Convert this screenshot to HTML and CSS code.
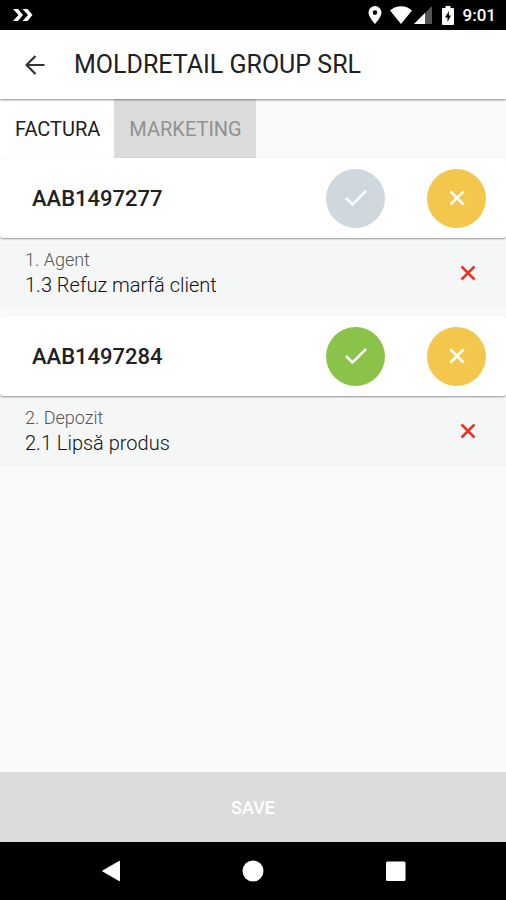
FILE: index.html
```html
<!DOCTYPE html>
<html lang="ro">
<head>
<meta charset="utf-8">
<meta name="viewport" content="width=device-width, initial-scale=1">
<title>MOLDRETAIL GROUP SRL</title>
<link rel="stylesheet" href="styles.css">
</head>
<body>
<div class="status">
  <svg width="20" height="14" viewBox="0 0 20 14" fill="#fff"><path d="M0 1h5l5 6-5 6H0l5.500-6zM9.500 1h5l5 6-5 6h-5l5.500-6z"/></svg>
  <div class="status-icons">
    <svg class="pin" width="14" height="18" viewBox="0 0 14 18"><path fill="#fff" fill-rule="evenodd" d="M7 0a6.500 6.500 0 0 1 6.500 6.500C13.500 11 7 18 7 18S.5 11 .5 6.500A6.500 6.500 0 0 1 7 0zm0 4.300a2.300 2.300 0 1 0 0 4.600 2.300 2.300 0 0 0 0-4.600z"/></svg>
    <svg width="22" height="18" viewBox="0 0 22 18"><path fill="#fff" d="M0 4.500C6-1.300 16-1.300 22 4.500L11 18z"/></svg>
    <svg class="signal" width="18" height="18" viewBox="0 0 18 18"><path fill="#555" d="M18 0v18H0z"/><path fill="#fff" d="M11 7v11H0z"/></svg>
    <svg class="battery" width="12" height="19" viewBox="0 0 12 19"><path fill="#fff" d="M3.500 0h5v2H11a1 1 0 0 1 1 1v15a1 1 0 0 1-1 1H1a1 1 0 0 1-1-1V3a1 1 0 0 1 1-1h2.500z"/><path fill="#000" d="M7 5L3 11.500h2.500V16L9 9.500H6.800z"/></svg>
    <span>9:01</span>
  </div>
</div>
<header class="appbar">
  <button class="back" aria-label="Back"><svg width="20" height="20" viewBox="0 0 20 20" fill="none" stroke="#333" stroke-width="2.200"><path d="M19.500 10H2M10.500 1L1.500 10l9 9"/></svg></button>
  <h1>MOLDRETAIL GROUP SRL</h1>
</header>
<nav class="tabs">
  <button class="tab active">FACTURA</button>
  <button class="tab">MARKETING</button>
</nav>
<main>
  <section class="invoice">
    <div class="row">
      <h2>AAB1497277</h2>
      <button class="round muted" aria-label="Accept"><svg width="24" height="20" viewBox="0 0 24 20"><path d="M2 10l6.500 6.500L22 3"/></svg></button>
      <button class="round reject" aria-label="Reject"><svg width="16" height="16" viewBox="0 0 16 16"><path d="M1.500 1.500l13 13M14.500 1.500l-13 13"/></svg></button>
    </div>
    <div class="detail">
      <div><p class="group">1. Agent</p><p class="reason">1.3 Refuz marfă client</p></div>
      <button class="remove" aria-label="Remove"><svg width="16" height="16" viewBox="0 0 16 16"><path d="M1.500 1.500l13 13M14.500 1.500l-13 13"/></svg></button>
    </div>
  </section>
  <section class="invoice">
    <div class="row">
      <h2>AAB1497284</h2>
      <button class="round accept" aria-label="Accept"><svg width="24" height="20" viewBox="0 0 24 20"><path d="M2 10l6.500 6.500L22 3"/></svg></button>
      <button class="round reject" aria-label="Reject"><svg width="16" height="16" viewBox="0 0 16 16"><path d="M1.500 1.500l13 13M14.500 1.500l-13 13"/></svg></button>
    </div>
    <div class="detail">
      <div><p class="group">2. Depozit</p><p class="reason">2.1 Lipsă produs</p></div>
      <button class="remove" aria-label="Remove"><svg width="16" height="16" viewBox="0 0 16 16"><path d="M1.500 1.500l13 13M14.500 1.500l-13 13"/></svg></button>
    </div>
  </section>
</main>
<button class="save">SAVE</button>
<div class="navbar">
  <button aria-label="Back"><svg width="22" height="22" viewBox="0 0 22 22"><path fill="#fff" d="M20 1.500v19a.7.7 0 0 1-1 .6L2.500 11.600a.7.7 0 0 1 0-1.200L19 .9a.7.7 0 0 1 1 .6z"/></svg></button>
  <button aria-label="Home"><svg width="22" height="22" viewBox="0 0 22 22"><circle cx="11" cy="11" r="10.500" fill="#fff"/></svg></button>
  <button aria-label="Recents"><svg width="22" height="22" viewBox="0 0 22 22"><rect x="2" y="1.500" width="19.500" height="19.500" rx="1.500" fill="#fff"/></svg></button>
</div>
</body>
</html>
```
FILE: styles.css
```css
* { box-sizing: border-box; }
body {
  margin: 0;
  min-height: 100vh;
  display: flex;
  flex-direction: column;
  background: #fafafa;
  color: #212121;
  font-family: Roboto, "Liberation Sans", sans-serif;
}
h1, h2, p { margin: 0; }
button {
  border: 0;
  padding: 0;
  background: none;
  color: inherit;
  font: inherit;
}
svg { display: block; }
.status {
  display: flex;
  align-items: center;
  justify-content: space-between;
  height: 30px;
  padding: 0 10px 0 13px;
  background: #000;
  color: #fff;
  font-size: 17px;
  font-weight: 500;
}
.status-icons { display: flex; align-items: center; }
.pin { margin-right: 8px; }
.signal { margin: 0 10px 0 2px; }
.battery { margin-right: 9px; }
.appbar {
  position: relative;
  display: flex;
  align-items: center;
  gap: 29px;
  height: 69px;
  padding: 0 25px;
  background: #fff;
  box-shadow: 0 1px 2px rgba(0, 0, 0, .45);
}
h1 { font-size: 25px; font-weight: 400; }
.tabs { display: flex; height: 59px; }
.tab {
  padding: 0 14px 0 15px;
  background: #dcdcdc;
  color: #919191;
  font-size: 20px;
}
.tab.active { background: #fff; color: #212121; }
main { flex: 1; }
.invoice { margin-bottom: 8px; }
.row {
  position: relative;
  display: flex;
  align-items: center;
  height: 80px;
  padding: 0 20px 0 32px;
  background: #fff;
  border-radius: 3px;
  box-shadow: 0 1px 2px rgba(0, 0, 0, .4);
}
h2 { flex: 1; font-size: 22px; font-weight: 500; }
.round {
  display: grid;
  place-items: center;
  width: 59px;
  height: 59px;
  margin-left: 42px;
  border-radius: 50%;
}
.round path { fill: none; stroke: #fff; stroke-width: 2.5; }
.muted { background: #cfd8dc; }
.accept { background: #8bc34a; }
.reject { background: #f3c64c; }
.detail {
  display: flex;
  align-items: center;
  justify-content: space-between;
  height: 70px;
  padding: 0 30px 0 25px;
  background: #f5f7f7;
}
.group { color: #555; font-size: 18px; font-weight: 300; line-height: 24px; }
.reason { color: #111; font-size: 20px; font-weight: 300; line-height: 26px; }
.remove path { fill: none; stroke: #e93323; stroke-width: 2.5; }
.save {
  height: 70px;
  background: #dcdcdc;
  color: #fff;
  font-size: 18px;
  font-weight: 500;
}
.navbar {
  display: grid;
  grid-template-columns: 1fr 64px 1fr;
  place-items: center;
  height: 58px;
  padding: 0 1px;
  background: #000;
}
```
